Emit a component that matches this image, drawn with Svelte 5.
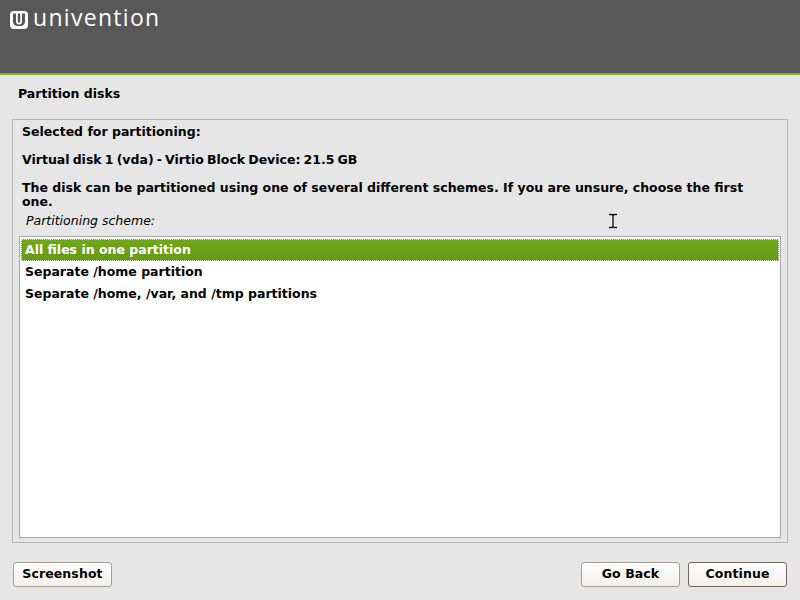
<script>
  let schemes = [
    "All files in one partition",
    "Separate /home partition",
    "Separate /home, /var, and /tmp partitions",
  ];
  let selected = $state(0);
</script>

<div class="page">
  <header class="banner">
    <div class="logo">
      <svg width="18" height="18" viewBox="0 0 18 18">
        <rect width="18" height="18" rx="4" fill="#fff" />
        <path d="M3 2.500h12v8a4.500 4.500 0 0 1-4.500 4.500h-3A4.500 4.500 0 0 1 3 10.500z" fill="#585858" />
        <path d="M6 1v9.500a3 3 0 0 0 6 0V1h-1.800v9.500a1.200 1.200 0 0 1-2.400 0V1z" fill="#fff" />
      </svg>
      <span class="wordmark">univention</span>
    </div>
  </header>

  <h1 class="title">Partition disks</h1>

  <main class="panel">
    <p class="line">Selected for partitioning:</p>
    <p class="line disk">Virtual disk 1 (vda) - Virtio Block Device: 21.5 GB</p>
    <p class="line para">
      The disk can be partitioned using one of several different schemes. If you are unsure, choose the first one.
    </p>
    <div class="label">Partitioning scheme:</div>
    <ul class="list">
      {#each schemes as scheme, i}
        <li>
          <button class="row" class:active={selected === i} onclick={() => (selected = i)}>{scheme}</button>
        </li>
      {/each}
    </ul>
  </main>

  <footer class="actions">
    <button class="btn">Screenshot</button>
    <div class="right">
      <button class="btn">Go Back</button>
      <button class="btn primary">Continue</button>
    </div>
  </footer>

  <svg class="cursor" width="10" height="16" viewBox="0 0 10 16">
    <path d="M1 1.500h3l1 1 1-1h3M5 2.500v11M1 14.500h3l1-1 1 1h3" fill="none" stroke="#fff" stroke-width="2.400" />
    <path d="M1 1.500h3l1 1 1-1h3M5 2.500v11M1 14.500h3l1-1 1 1h3" fill="none" stroke="#000" stroke-width="1.300" />
  </svg>
</div>

<style>
  :global(body) {
    margin: 0;
  }

  .page {
    position: relative;
    width: 800px;
    height: 600px;
    overflow: hidden;
    display: flex;
    flex-direction: column;
    background: #e6e6e6;
    font-family: "DejaVu Sans", sans-serif;
    font-size: 12.5px;
    color: #000;
  }

  .banner {
    height: 73px;
    background: #585858;
    border-bottom: 2px solid #7db51d;
    flex: none;
  }

  .logo {
    display: flex;
    align-items: flex-start;
    gap: 5px;
    padding: 11px 0 0 10px;
    height: 18px;
  }

  .wordmark {
    font-family: "Open Sans", sans-serif;
    font-size: 23px;
    font-weight: 400;
    letter-spacing: 1.3px;
    color: #fff;
    line-height: 18px;
    margin-top: -3px;
  }

  .title {
    margin: 0;
    padding: 10px 0 0 18px;
    height: 34px;
    font-size: 12.5px;
    font-weight: bold;
    line-height: 17px;
    flex: none;
  }

  .panel {
    margin: 0 12px;
    width: 776px;
    height: 424px;
    box-sizing: border-box;
    border: 1px solid #b4b4b4;
    padding: 3px 6px 4px 6px;
    display: flex;
    flex-direction: column;
    flex: none;
  }

  .line {
    margin: 0 0 11px 3px;
    font-weight: bold;
    line-height: 17px;
  }

  .disk {
    word-spacing: -1.2px;
  }

  .para {
    margin-bottom: 0;
    margin-right: 30px;
    line-height: 14px;
    padding-top: 2px;
  }

  .label {
    font-style: italic;
    line-height: 17px;
    margin: 3px 0 7px 7px;
  }

  .list {
    list-style: none;
    margin: 0;
    padding: 2px 1px 1px;
    flex: 1;
    background: #fff;
    border: 1px solid #a8a8a8;
  }

  .row {
    display: block;
    width: 100%;
    height: 22px;
    padding: 0 4px;
    border: 0;
    background: none;
    font: bold 12.5px/22px "DejaVu Sans", sans-serif;
    text-align: left;
    color: #000;
  }

  .row.active {
    background: linear-gradient(#70a81a, #659818);
    outline: 1px dotted #dfe8cc;
    outline-offset: -1px;
    color: #fff;
  }

  .actions {
    display: flex;
    justify-content: space-between;
    padding: 19px 13px 0 13px;
  }

  .right {
    display: flex;
    gap: 8px;
  }

  .btn {
    width: 99px;
    height: 25px;
    padding: 0 0 2px;
    border: 1px solid #a89f94;
    border-radius: 3px;
    background: linear-gradient(#fdfdfc, #f3f0ec);
    font: bold 12.5px/21px "DejaVu Sans", sans-serif;
    letter-spacing: 0.1px;
    color: #000;
  }

  .btn.primary {
    border-color: #6e665c;
  }

  .cursor {
    position: absolute;
    left: 608px;
    top: 213px;
  }
</style>
